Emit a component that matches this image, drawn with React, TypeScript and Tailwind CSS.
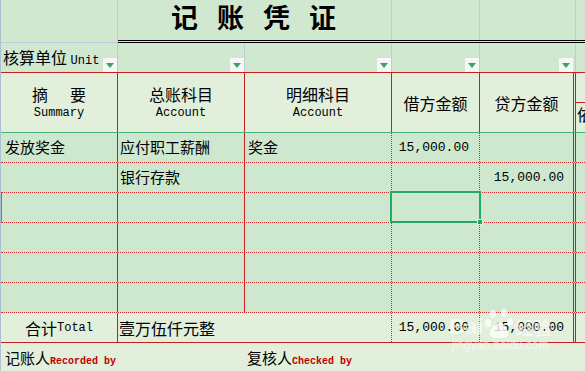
import React from "react";

type Entry = {
  summary: string;
  account: string;
  detail: string;
  debit: string;
  credit: string;
};

const entries: Entry[] = [
  { summary: "发放奖金", account: "应付职工薪酬", detail: "奖金", debit: "15,000.00", credit: "" },
  { summary: "", account: "银行存款", detail: "", debit: "", credit: "15,000.00" },
  { summary: "", account: "", detail: "", debit: "", credit: "" },
  { summary: "", account: "", detail: "", debit: "", credit: "" },
  { summary: "", account: "", detail: "", debit: "", credit: "" },
  { summary: "", account: "", detail: "", debit: "", credit: "" },
];

function Dropdown() {
  return (
    <div className="flex h-[14px] w-[14px] shrink-0 items-center justify-center self-end bg-[#f6f8f6]">
      <svg width="8" height="5" viewBox="0 0 8 5">
        <path d="M0 0h8L4 5z" fill="#3c9f6f" />
      </svg>
    </div>
  );
}

export default function App() {
  const mono = "font-['Liberation_Mono',monospace]";

  return (
    <div className="relative h-[371px] w-[585px] overflow-hidden border-l border-[#aebfcf] bg-[#e2efdb] font-['Noto_Sans_CJK_SC',sans-serif] text-black">
      {/* 标题 */}
      <div className="flex h-[43px] bg-[#d0e7d0]">
        <div className="w-[117px] shrink-0 border-r border-b border-[#bccbd8]" />
        <div className="flex flex-1 border-b-[3px] border-double border-black">
          <div className="flex w-[274px] shrink-0 items-center border-r border-[#bccbd8] pb-[6px] pl-[53px] text-[27px] font-bold leading-[34px] tracking-[19px]">
            记账凭证
          </div>
          <div className="w-[88px] shrink-0 border-r border-[#bccbd8]" />
          <div className="w-[96px] shrink-0 border-r border-[#bccbd8]" />
          <div className="flex-1" />
        </div>
      </div>

      {/* 核算单位 */}
      <div className="flex h-[30px] border-b border-[#c81e1e] bg-[#d0e7d0]">
        <div className="flex w-[117px] shrink-0 items-center justify-between border-r border-[#bccbd8] pl-[2px]">
          <span className="whitespace-nowrap pt-[2px] text-[16px] leading-[20px]">
            核算单位 <span className={`${mono} text-[12px]`}>Unit</span>
          </span>
          <Dropdown />
        </div>
        <div className="flex w-[127px] shrink-0 justify-end border-r border-[#bccbd8]">
          <Dropdown />
        </div>
        <div className="flex w-[147px] shrink-0 justify-end border-r border-[#bccbd8]">
          <Dropdown />
        </div>
        <div className="flex w-[88px] shrink-0 justify-end border-r border-[#bccbd8]">
          <Dropdown />
        </div>
        <div className="flex w-[94px] shrink-0 justify-end border-r border-transparent">
          <Dropdown />
        </div>
        <div className="w-[2px] shrink-0 border-r border-[#bccbd8]" />
        <div className="flex-1" />
      </div>

      {/* 表头 */}
      <div className="flex h-[60px] border-b border-[#47b27a] bg-[#e2efdb]">
        <div className="flex w-[117px] shrink-0 flex-col items-center justify-center border-r border-[#c81e1e]">
          <div className="flex gap-[22px] text-[16px] leading-[21px]">
            <span>摘</span>
            <span>要</span>
          </div>
          <span className={`${mono} text-[12px] leading-[16px]`}>Summary</span>
        </div>
        <div className="flex w-[127px] shrink-0 flex-col items-center justify-center border-r border-[#c81e1e]">
          <span className="text-[16px] leading-[21px]">总账科目</span>
          <span className={`${mono} text-[12px] leading-[16px]`}>Account</span>
        </div>
        <div className="flex w-[147px] shrink-0 flex-col items-center justify-center border-r border-[#c81e1e]">
          <span className="text-[16px] leading-[21px]">明细科目</span>
          <span className={`${mono} text-[12px] leading-[16px]`}>Account</span>
        </div>
        <div className="flex w-[88px] shrink-0 items-center justify-center border-r border-[#c81e1e] text-[16px]">
          借方金额
        </div>
        <div className="flex w-[94px] shrink-0 items-center justify-center border-r border-[#c81e1e] text-[16px]">
          贷方金额
        </div>
        <div className="w-[2px] shrink-0 border-r border-[#c81e1e]" />
        <div className="flex flex-1 flex-col overflow-hidden">
          <div className="h-[30px] border-b border-[#c81e1e]" />
          <span className="pl-[1px] pt-[2px] text-[16px] leading-[19px]">依</span>
        </div>
      </div>

      {/* 明细行 */}
      {entries.map((e, i) => (
        <div
          key={i}
          className="flex h-[30px] border-b border-dotted border-[#d02a2a] bg-[#cde8cf] text-[15px]"
        >
          <div className="relative flex w-[117px] shrink-0 items-center border-r border-solid border-[#c81e1e] pl-[4px]">
            {i === 2 && (
              <span className="absolute -left-[1px] top-0 h-full w-[2px] bg-[#27a86a]" />
            )}
            {e.summary}
          </div>
          <div className="flex w-[127px] shrink-0 items-center border-r border-solid border-[#c81e1e] pl-[2px]">
            {e.account}
          </div>
          <div className="flex w-[147px] shrink-0 items-center border-r border-dotted border-[#d02a2a] pl-[3px]">
            {e.detail}
          </div>
          <div
            className={`relative flex w-[88px] shrink-0 items-center justify-end border-r border-dotted border-[#d02a2a] pr-[10px] ${mono} text-[13px]`}
          >
            {e.debit}
            {i === 2 && (
              <div className="absolute -bottom-[1px] -left-[2px] -right-[2px] -top-[2px] border-2 border-[#27a86a]">
                <span className="absolute -bottom-[4px] -right-[4px] h-[6px] w-[6px] border border-[#e2efdb] bg-[#27a86a]" />
              </div>
            )}
          </div>
          <div
            className={`flex w-[94px] shrink-0 items-center justify-end border-r border-solid border-[#c81e1e] pr-[9px] ${mono} text-[13px]`}
          >
            {e.credit}
          </div>
          <div className="w-[2px] shrink-0 border-r border-solid border-[#c81e1e]" />
          <div className="flex-1" />
        </div>
      ))}

      {/* 合计 */}
      <div className="flex h-[30px] border-b border-[#c81e1e] bg-[#e2efdb]">
        <div className="flex w-[117px] shrink-0 items-center justify-center border-r border-[#c81e1e] pt-[1px]">
          <span className="text-[16px]">合计</span>
          <span className={`${mono} text-[12px]`}>Total</span>
        </div>
        <div className="flex w-[274px] shrink-0 items-center border-r border-dotted border-[#d02a2a] pl-[1px] text-[16px]">
          壹万伍仟元整
        </div>
        <div
          className={`flex w-[88px] shrink-0 items-center justify-end border-r border-dotted border-[#d02a2a] pr-[10px] ${mono} text-[13px]`}
        >
          15,000.00
        </div>
        <div
          className={`flex w-[94px] shrink-0 items-center justify-end border-r border-[#c81e1e] pr-[9px] ${mono} text-[13px]`}
        >
          15,000.00
        </div>
        <div className="w-[2px] shrink-0 border-r border-[#c81e1e]" />
        <div className="flex-1" />
      </div>

      {/* 签名 */}
      <div className="flex h-[28px] items-center pt-[3px] text-[15px]">
        <div className="w-[246px] shrink-0 pl-[4px]">
          记账人
          <span className={`${mono} text-[10px] font-bold text-[#c00000]`}>Recorded by</span>
        </div>
        <div>
          复核人
          <span className={`${mono} text-[10px] font-bold text-[#c00000]`}>Checked by</span>
        </div>
      </div>

      {/* 水印 */}
      <div className="pointer-events-none absolute left-[448px] top-[308px] flex flex-col items-center text-white/60">
        <div className="flex items-end gap-[2px]">
          <span className="font-['Liberation_Sans',sans-serif] text-[22px] font-bold leading-[22px]">Bai</span>
          <svg width="28" height="30" viewBox="0 0 28 30" className="opacity-80">
            <ellipse cx="8" cy="6" rx="3" ry="4" fill="white" />
            <ellipse cx="19" cy="5" rx="3" ry="4" fill="white" />
            <ellipse cx="3" cy="15" rx="3" ry="4" fill="white" />
            <ellipse cx="25" cy="14" rx="3" ry="4" fill="white" />
            <path d="M14 14c-5 0-9 8-9 12s4 4 9 4 9 0 9-4-4-12-9-12z" fill="white" />
          </svg>
          <span className="text-[18px] font-bold leading-[22px]">经验</span>
        </div>
        <span className="font-['Liberation_Sans',sans-serif] text-[12px] leading-[14px]">jingyan.baidu.com</span>
      </div>
    </div>
  );
}
